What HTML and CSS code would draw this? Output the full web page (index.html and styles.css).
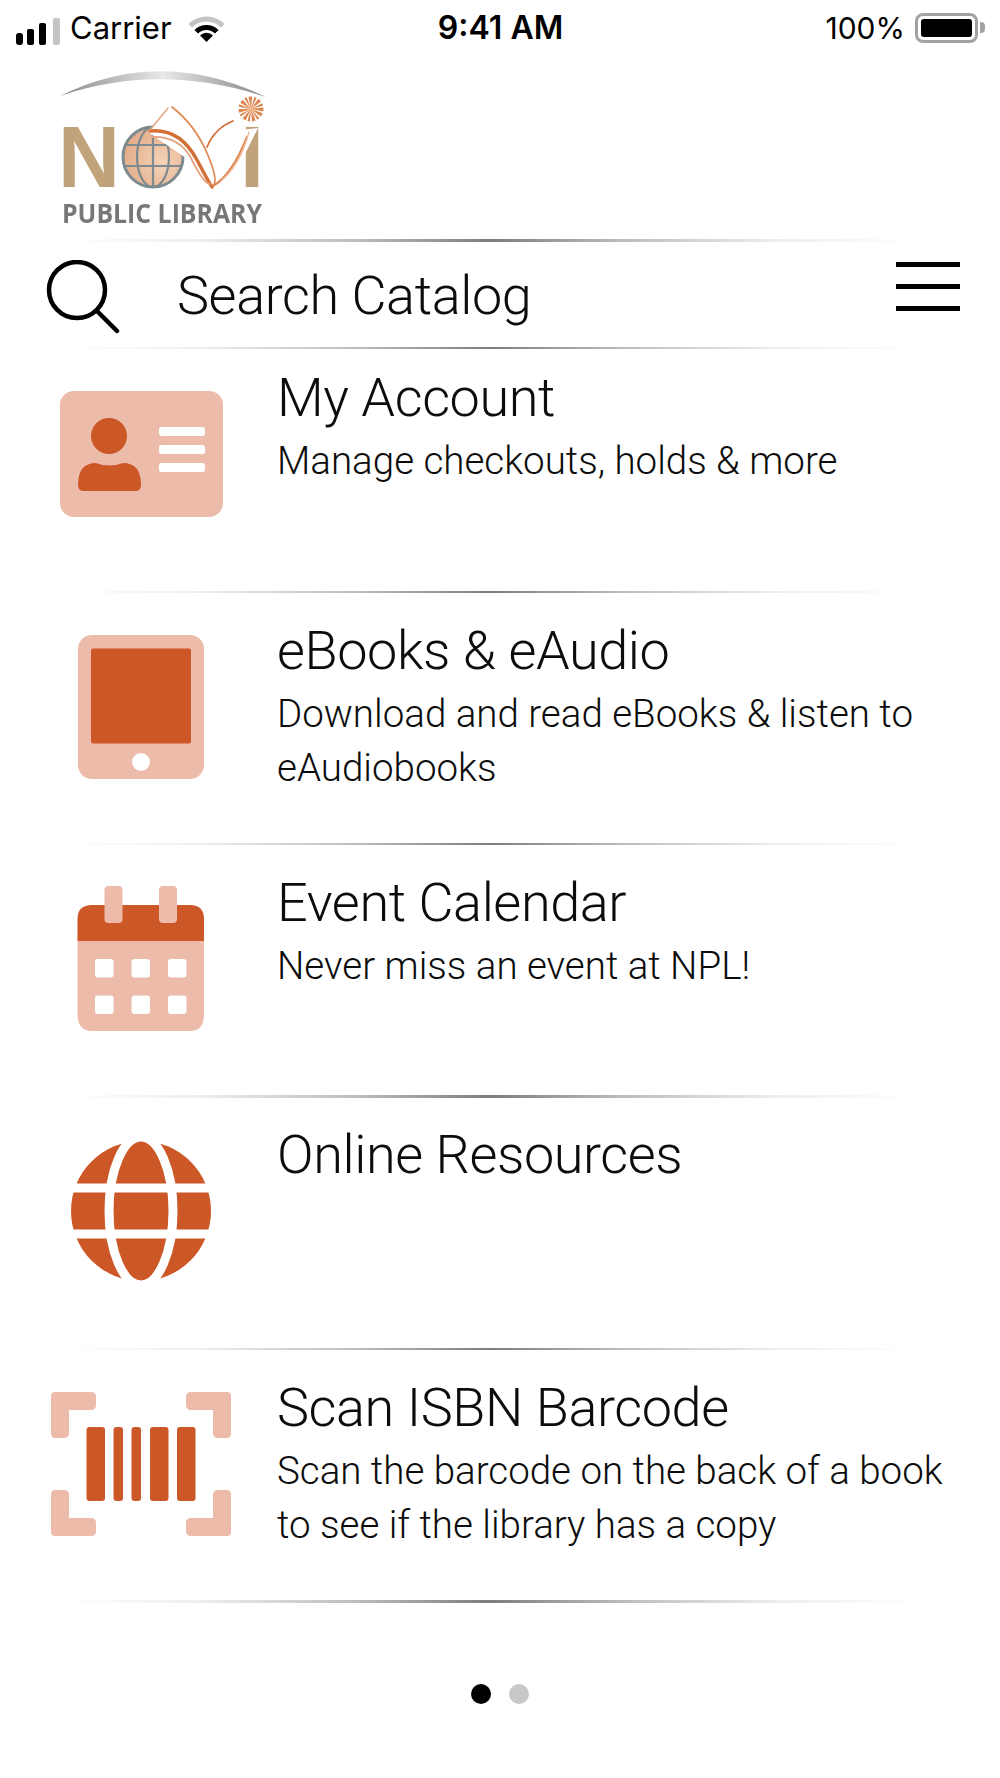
FILE: index.html
```html
<!DOCTYPE html>
<html lang="en">
<head>
    <meta charset="UTF-8">
    <meta name="viewport" content="width=device-width, initial-scale=1.0">
    <title>Novi Public Library</title>
    <link rel="stylesheet" href="styles.css">
</head>
<body>

    <!-- Status bar -->
    <div class="status-bar">
        <div class="status-left">
            <svg class="signal" width="44" height="27" viewBox="0 0 44 27">
                <rect x="0" y="15" width="7" height="12" rx="3" fill="#000"/>
                <rect x="11" y="11" width="7" height="16" rx="2" fill="#000"/>
                <rect x="23" y="5" width="7" height="22" rx="2" fill="#000"/>
                <rect x="37" y="0" width="7" height="27" rx="2" fill="#c4c4c4"/>
            </svg>
            <span class="carrier">Carrier</span>
            <svg class="wifi" width="37" height="26" viewBox="0 0 37 26">
                <path d="M2.2 9.7A23 23 0 0 1 34.8 9.7" fill="none" stroke="#c4c4c4" stroke-width="5"/>
                <path d="M8.25 15.75A14.5 14.5 0 0 1 28.75 15.75" fill="none" stroke="#000" stroke-width="5"/>
                <path d="M18.5 26L12 19.5A9 9 0 0 1 25 19.5Z" fill="#000"/>
            </svg>
        </div>
        <div class="status-time">9:41 AM</div>
        <div class="status-right">
            <span class="percent">100%</span>
            <span class="battery"><span class="battery-fill"></span></span>
            <span class="battery-tip"></span>
        </div>
    </div>

    <!-- Logo -->
    <header class="logo">
        <svg width="240" height="180" viewBox="40 60 240 180">
            <defs>
                <linearGradient id="arc" x1="0" x2="1" y1="0" y2="0">
                    <stop offset="0" stop-color="#8b8b8e"/>
                    <stop offset="0.5" stop-color="#e8e8e8"/>
                    <stop offset="1" stop-color="#85858a"/>
                </linearGradient>
                <radialGradient id="ball" cx="0.65" cy="0.6" r="0.75">
                    <stop offset="0" stop-color="#f4d3b8"/>
                    <stop offset="1" stop-color="#e2a884"/>
                </radialGradient>
            </defs>
            <path d="M60 96Q160 46 266 97Q160 62 60 96Z" fill="url(#arc)"/>
            <text class="logo-letter" x="58" y="187" textLength="62" lengthAdjust="spacingAndGlyphs">N</text>
            <text class="logo-letter" x="240" y="187" textLength="24" lengthAdjust="spacingAndGlyphs">I</text>
            <circle cx="153" cy="157" r="30" fill="url(#ball)" stroke="#7d8a90" stroke-width="3"/>
            <g fill="none" stroke="#7d8a90" stroke-width="2.2">
                <path d="M125 145H181M124 166H182M153 127V187"/>
                <ellipse cx="153" cy="157" rx="16" ry="30"/>
            </g>
            <path d="M148 132L171 107L208 160L212 186L196 165Z" fill="#fff"/>
            <path d="M212 186L240 130L258 128L233 178Z" fill="#fff"/>
            <g fill="none" stroke="#d36f36" stroke-linecap="round">
                <path d="M150 131Q180 128 197 160T212 186" stroke-width="3.4"/>
                <path d="M152 137Q180 136 192 160T210 184" stroke-width="1.8" stroke="#e6a27a"/>
                <path d="M172 107Q195 125 207 153T213 186" stroke-width="1.8" stroke="#e08a55"/>
                <path d="M150 130L168 108" stroke-width="1.4" stroke="#e6a27a"/>
                <path d="M213 186Q232 175 247 137" stroke-width="2.2" stroke="#e08a55"/>
                <path d="M207 147Q215 128 233 121" stroke-width="1.8"/>
                <path d="M222 180Q240 165 249 132" stroke-width="1.4" stroke="#eebb9c"/>
            </g>
            <circle cx="251" cy="109" r="8" fill="none" stroke="#dd8550" stroke-width="9" stroke-dasharray="1.600 1.200 2.400 1.400"/>
            <circle cx="251" cy="109" r="4" fill="#eeb48c"/>
            <text class="logo-name" x="62" y="223" textLength="200" lengthAdjust="spacingAndGlyphs">PUBLIC LIBRARY</text>
        </svg>
    </header>

    <!-- Search -->
    <div class="search-bar divider">
        <svg class="search-icon" width="74" height="74" viewBox="0 0 74 74">
            <circle cx="31" cy="30" r="28" fill="none" stroke="#000" stroke-width="4.5"/>
            <path d="M51 51L71 71" stroke="#000" stroke-width="4.5" stroke-linecap="round"/>
        </svg>
        <div class="search-text">Search Catalog</div>
        <div class="menu-icon"><span></span><span></span><span></span></div>
    </div>

    <!-- Menu list -->
    <div class="menu-list">

        <div class="menu-row divider">
            <svg class="row-icon" width="180" height="160" viewBox="0 0 180 160">
                <rect x="9" y="17" width="163" height="126" rx="14" fill="#ecbbaa"/>
                <circle cx="58" cy="62" r="18" fill="#cd5827"/>
                <path d="M27 111Q27 89 45 89Q58 94 72 89Q90 89 90 111Q90 117 84 117H33Q27 117 27 111Z" fill="#cd5827"/>
                <rect x="108" y="53" width="46" height="9" rx="2.5" fill="#fff"/>
                <rect x="108" y="71" width="46" height="9" rx="2.5" fill="#fff"/>
                <rect x="108" y="89" width="46" height="9" rx="2.5" fill="#fff"/>
            </svg>
            <div class="row-text">
                <div class="row-title">My Account</div>
                <div class="row-sub">Manage checkouts, holds &amp; more</div>
            </div>
        </div>

        <div class="menu-row divider">
            <svg class="row-icon" width="180" height="160" viewBox="0 0 180 160">
                <rect x="27" y="8" width="126" height="144" rx="14" fill="#ecbbaa"/>
                <rect x="40" y="21.5" width="100" height="95" rx="2" fill="#cd5827"/>
                <circle cx="90" cy="135" r="9" fill="#fff"/>
            </svg>
            <div class="row-text">
                <div class="row-title">eBooks &amp; eAudio</div>
                <div class="row-sub">Download and read eBooks &amp; listen to eAudiobooks</div>
            </div>
        </div>

        <div class="menu-row divider">
            <svg class="row-icon" width="180" height="160" viewBox="0 0 180 160">
                <path d="M26.500 56H153V135Q153 152 139 152H41Q26.500 152 26.500 135Z" fill="#ecbbaa"/>
                <path d="M26.500 62V40Q26.500 26 41 26H139Q153 26 153 40V62Z" fill="#cd5827"/>
                <rect x="53.500" y="7" width="18" height="37" rx="4" fill="#ecbbaa"/>
                <rect x="108" y="7" width="18" height="37" rx="4" fill="#ecbbaa"/>
                <g fill="#fff">
                    <rect x="44" y="80" width="18.500" height="18.500" rx="3"/>
                    <rect x="80.500" y="80" width="18.500" height="18.500" rx="3"/>
                    <rect x="117" y="80" width="18.500" height="18.500" rx="3"/>
                    <rect x="44" y="116.500" width="18.500" height="18.500" rx="3"/>
                    <rect x="80.500" y="116.500" width="18.500" height="18.500" rx="3"/>
                    <rect x="117" y="116.500" width="18.500" height="18.500" rx="3"/>
                </g>
            </svg>
            <div class="row-text">
                <div class="row-title">Event Calendar</div>
                <div class="row-sub">Never miss an event at NPL!</div>
            </div>
        </div>

        <div class="menu-row divider">
            <svg class="row-icon" width="180" height="160" viewBox="0 0 180 160">
                <circle cx="90" cy="80" r="70" fill="#cd5827"/>
                <ellipse cx="90" cy="80" rx="32" ry="74" fill="none" stroke="#fff" stroke-width="9"/>
                <path d="M15 57H165M15 103H165" stroke="#fff" stroke-width="9"/>
            </svg>
            <div class="row-text">
                <div class="row-title">Online Resources</div>
            </div>
        </div>

        <div class="menu-row divider">
            <svg class="row-icon" width="180" height="160" viewBox="0 0 180 160">
                <g fill="#ecbbaa">
                    <path d="M0 12Q0 8 4 8H40Q45 8 45 13V21Q45 26 40 26H18V49Q18 54 13 54H4Q0 54 0 49Z"/>
                    <path d="M180 12Q180 8 176 8H140Q135 8 135 13V21Q135 26 140 26H162V49Q162 54 167 54H176Q180 54 180 49Z"/>
                    <path d="M0 148Q0 152 4 152H40Q45 152 45 147V139Q45 134 40 134H18V111Q18 106 13 106H4Q0 106 0 111Z"/>
                    <path d="M180 148Q180 152 176 152H140Q135 152 135 147V139Q135 134 140 134H162V111Q162 106 167 106H176Q180 106 180 111Z"/>
                </g>
                <g fill="#cd5827">
                    <rect x="35.500" y="43" width="18.500" height="74" rx="3"/>
                    <rect x="62.500" y="43" width="9.500" height="74" rx="3"/>
                    <rect x="80.500" y="43" width="9.500" height="74" rx="3"/>
                    <rect x="99" y="43" width="18.500" height="74" rx="3"/>
                    <rect x="126" y="43" width="18.500" height="74" rx="3"/>
                </g>
            </svg>
            <div class="row-text">
                <div class="row-title">Scan ISBN Barcode</div>
                <div class="row-sub">Scan the barcode on the back of a book to see if the library has a copy</div>
            </div>
        </div>

    </div>

    <!-- Page dots -->
    <div class="pager">
        <span class="dot dot-active"></span>
        <span class="dot"></span>
    </div>

</body>
</html>
```

FILE: styles.css
```css
body {
    font-family: Roboto, "Liberation Sans", sans-serif;
    margin: 0;
    padding: 0;
    background-color: #fff;
    color: #0c0c0c;
}

/* Status bar */
.status-bar {
    height: 60px;
    box-sizing: border-box;
    padding: 0 15px 5px 16px;
    display: grid;
    grid-template-columns: 1fr auto 1fr;
    align-items: center;
    color: #000;
    font-family: Inter, "Liberation Sans", sans-serif;
    font-size: 31px;
}
.status-left {
    display: flex;
    align-items: flex-end;
}
.signal {
    margin-right: 10px;
    margin-bottom: 1px;
}
.carrier {
    line-height: 36px;
    font-weight: 400;
}
.wifi {
    margin-left: 16px;
    margin-bottom: 4px;
}
.status-time {
    font-weight: 600;
    font-size: 32px;
}
.status-right {
    display: flex;
    align-items: center;
    justify-content: flex-end;
}
.percent {
    margin-right: 10px;
    font-size: 30px;
}
.battery {
    width: 63px;
    height: 30px;
    box-sizing: border-box;
    border: 3px solid #a2a2a2;
    border-radius: 8px;
    padding: 3px;
    display: block;
}
.battery-fill {
    display: block;
    height: 100%;
    background-color: #000;
    border-radius: 3px;
}
.battery-tip {
    width: 5px;
    height: 11px;
    margin-left: 2px;
    background-color: #a2a2a2;
    border-radius: 0 4px 4px 0;
}

/* Logo */
.logo {
    height: 180px;
    padding-left: 40px;
}
.logo svg {
    display: block;
    filter: blur(0.6px);
}
.logo-letter {
    font-family: "Liberation Sans", sans-serif;
    font-weight: 700;
    font-size: 87px;
    fill: #c0a27b;
}
.logo-name {
    font-family: "Open Sans", sans-serif;
    font-weight: 700;
    font-size: 27px;
    fill: #77777a;
}

/* Fading line under a row */
.divider {
    position: relative;
}
.divider::after {
    content: "";
    position: absolute;
    left: 65px;
    right: 85px;
    bottom: -1px;
    height: 2.5px;
    background: linear-gradient(to right, rgba(125, 125, 125, 0), rgba(125, 125, 125, 0.13) 16%, rgba(125, 125, 125, 0.5) 34%, #7d7d7d 50%, rgba(125, 125, 125, 0.5) 66%, rgba(125, 125, 125, 0.13) 84%, rgba(125, 125, 125, 0));
}

/* Search */
.search-bar {
    height: 108px;
    padding: 0 40px 0 46px;
    display: flex;
    align-items: center;
}
.search-bar::before {
    content: "";
    position: absolute;
    left: 65px;
    right: 85px;
    top: -1px;
    height: 2.5px;
    background: linear-gradient(to right, rgba(125, 125, 125, 0), rgba(125, 125, 125, 0.13) 16%, rgba(125, 125, 125, 0.5) 34%, #7d7d7d 50%, rgba(125, 125, 125, 0.5) 66%, rgba(125, 125, 125, 0.13) 84%, rgba(125, 125, 125, 0));
}
.search-icon {
    flex-shrink: 0;
    margin-top: 5px;
}
.search-text {
    flex: 1;
    margin-left: 57px;
    font-size: 54px;
    font-weight: 300;
    letter-spacing: -0.4px;
    margin-top: 2px;
}
.menu-icon {
    display: flex;
    flex-direction: column;
    gap: 17px;
    width: 64px;
    margin-top: -16px;
}
.menu-icon span {
    display: block;
    height: 5px;
    background-color: #000;
}

/* Menu rows */
.menu-row {
    height: 252.4px;
    box-sizing: border-box;
    padding: 34.5px 40px 0 51px;
    display: flex;
    gap: 46px;
}
.menu-row:first-child {
    height: 244px;
    padding-top: 26px;
}
.row-icon {
    flex-shrink: 0;
}
.row-text {
    margin-top: -8px;
}
.row-title {
    font-size: 54px;
    font-weight: 300;
    letter-spacing: -0.4px;
    line-height: 64px;
}
.row-sub {
    font-size: 38.5px;
    font-weight: 300;
    line-height: 54px;
    margin-top: 4px;
}

/* Page dots */
.pager {
    display: flex;
    justify-content: center;
    gap: 18px;
    margin-top: 82px;
}
.dot {
    width: 20px;
    height: 20px;
    border-radius: 50%;
    background-color: #c8c8c8;
}
.dot-active {
    background-color: #000;
}
```
